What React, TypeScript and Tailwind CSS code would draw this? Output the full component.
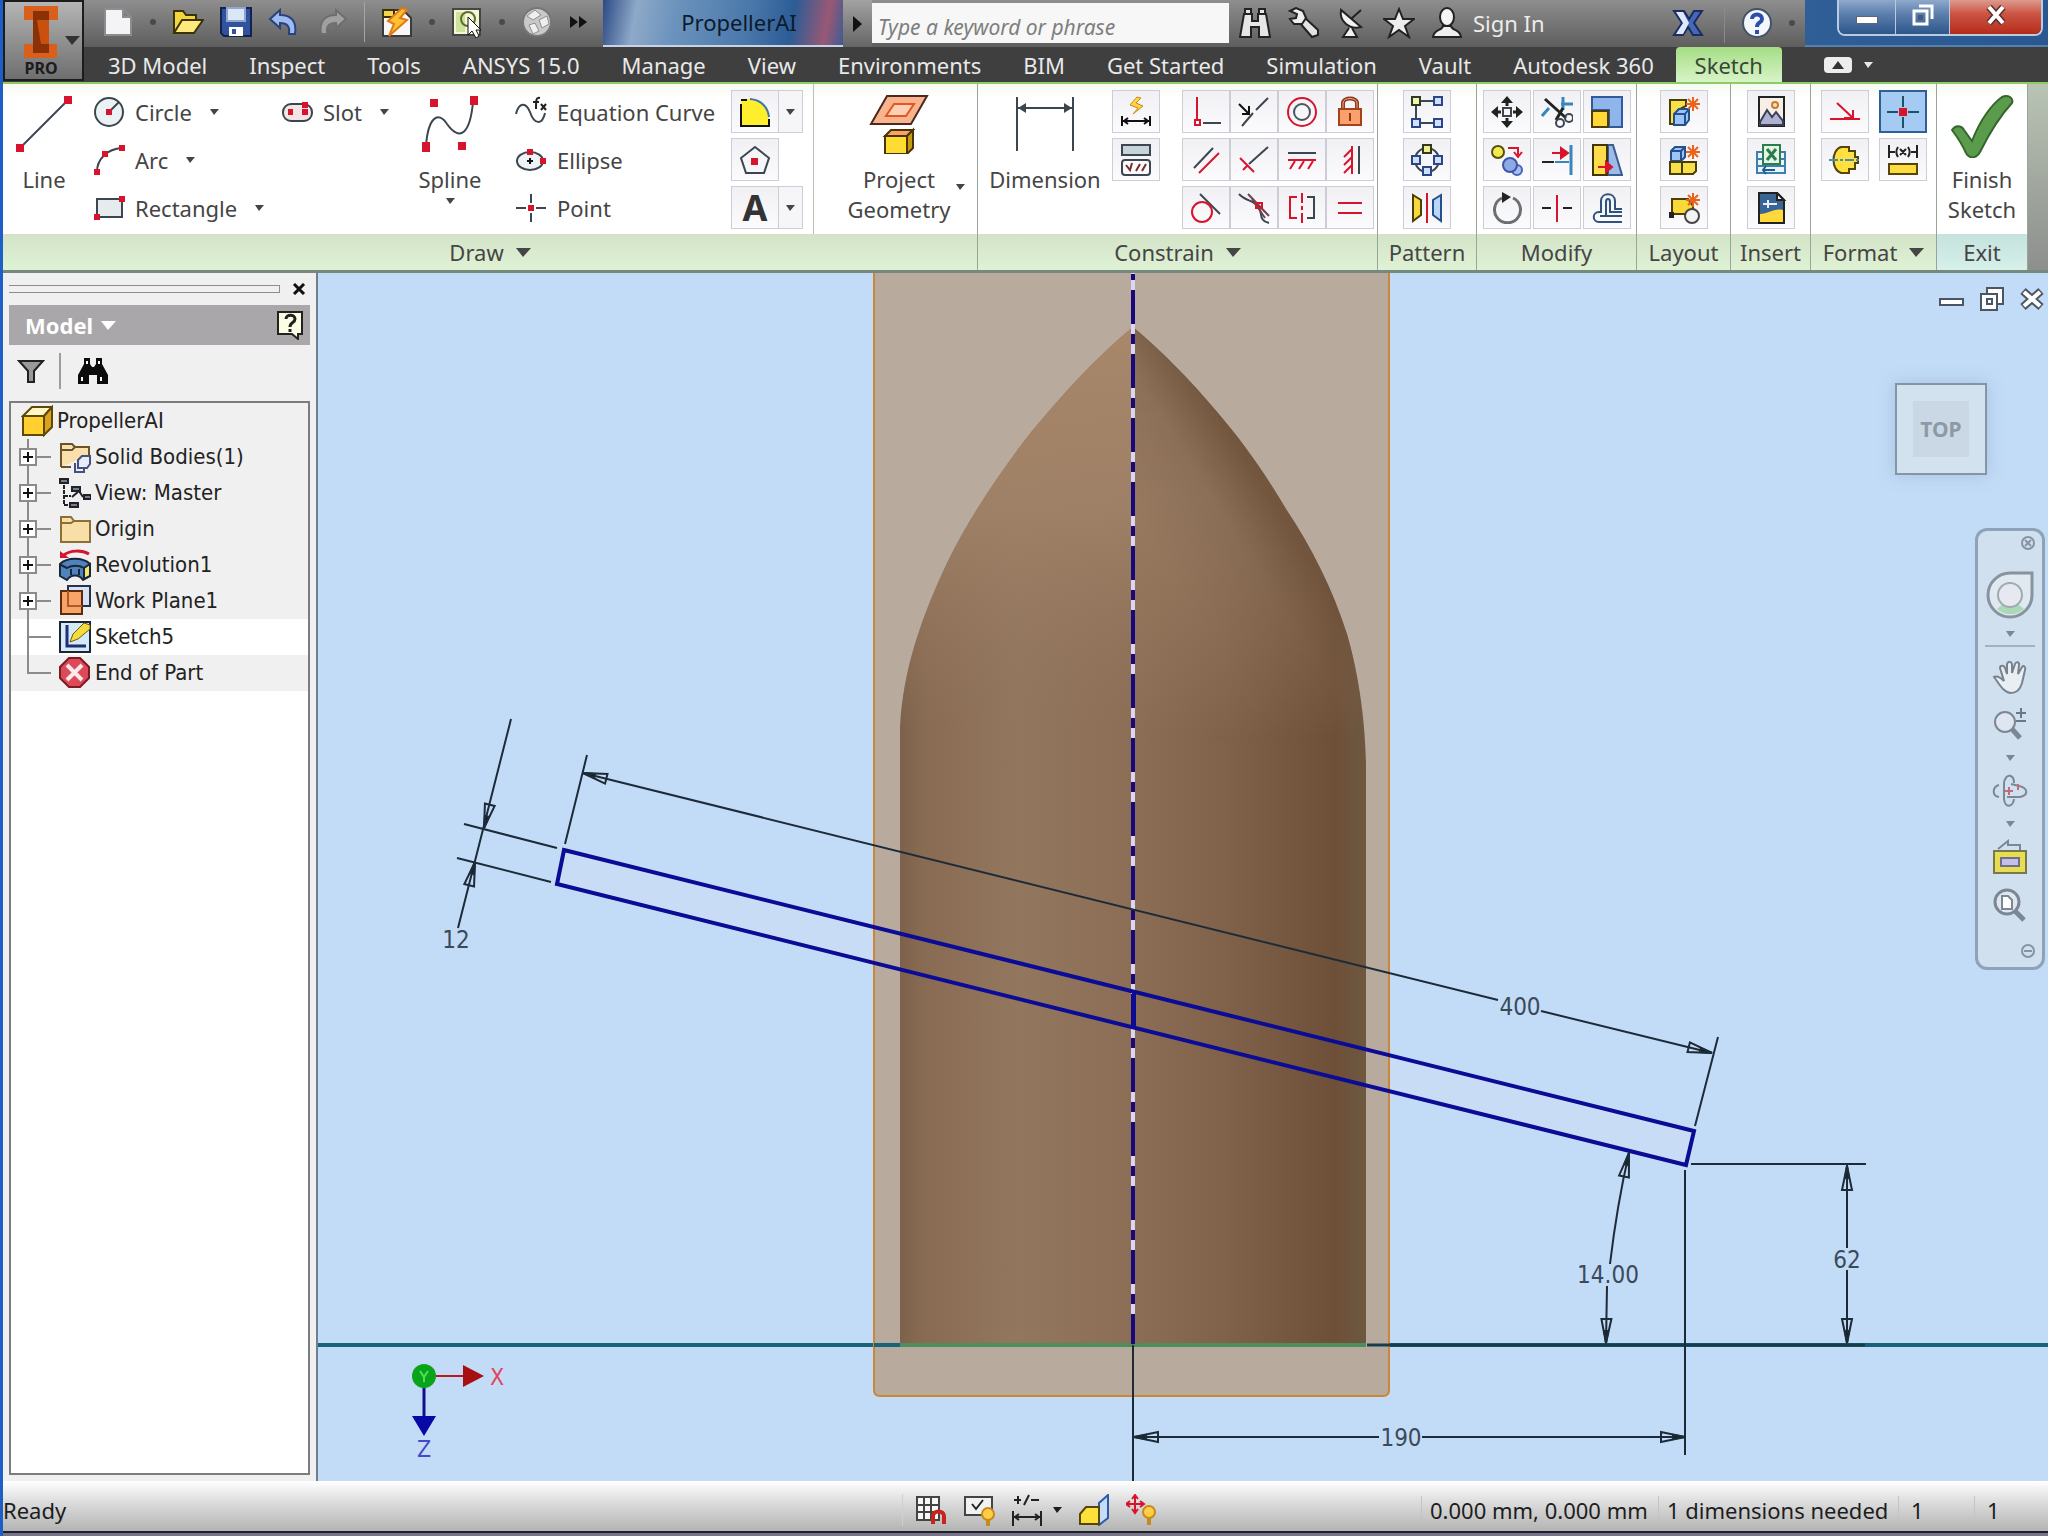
import type { ReactNode } from "react";

const red = "#d8142c";
const ink = "#3c4650";

const Icon = ({ size = 32, children }: { size?: number; children: ReactNode }) => (
  <svg
    width={size}
    height={size}
    viewBox={`0 0 ${size} ${size}`}
    fill="none"
    stroke={ink}
    strokeWidth={2}
    className="block shrink-0"
    aria-hidden="true"
  >
    {children}
  </svg>
);

const Caret = ({ big = false }: { big?: boolean }) =>
  big ? (
    <svg width="15" height="9" viewBox="0 0 15 9" className="shrink-0" aria-hidden="true">
      <path d="M0 0H15L7 9Z" fill="currentColor" />
    </svg>
  ) : (
    <svg width="9" height="6" viewBox="0 0 9 6" className="shrink-0" aria-hidden="true">
      <path d="M0 0H9L4 6Z" fill="currentColor" />
    </svg>
  );

const Dot = () => <span className="h-1.5 w-1.5 shrink-0 rounded-sm bg-[#4a4a4a]" />;

const Spark = () => (
  <path d="M25 1V15M18 8H32M20 3L30 13M30 3L20 13" stroke="#e8641c" strokeWidth={2} />
);

const icons = {
  newFile: <path d="M3 3H21L29 11V29H3Z M21 3V11H29" fill="#f4f4f6" stroke="#8b8b90" />,
  open: (
    <>
      <path d="M2 27V5H11L14 9H24V14" fill="#f4d540" stroke="#3b3208" />
      <path d="M2 27L10 14H31L22 27Z" fill="#ffe97a" stroke="#3b3208" />
    </>
  ),
  save: (
    <>
      <path d="M1 2H31V30H4L1 27Z" fill="#31529c" stroke="#14234d" />
      <path d="M7 2H25V15H7Z" fill="#dbe6f6" stroke="#8fa6d2" />
      <path d="M9 21H23V30H9Z" fill="#fff" stroke="none" />
      <path d="M12 23H16V28H12Z" fill="#31529c" stroke="none" />
    </>
  ),
  undo: <path d="M2 13L12 4V9C23 9 29 15 27 28H21C22 20 19 17 12 17V22Z" fill="#9dbcf0" stroke="#2a417c" />,
  redo: <path d="M30 13L20 4V9C9 9 3 15 5 28H11C10 20 13 17 20 17V22Z" fill="#a0a0a0" stroke="#6e6e6e" />,
  updateDoc: (
    <>
      <path d="M2 4H22L30 12V30H2Z" fill="#f7f7f7" stroke="#3a3a3a" />
      <path d="M2 4H13V11H2Z" fill="#f5d64a" stroke="#3a3208" />
      <path d="M21 2L7 15L13 18L8 30L26 14L19 12L26 4Z" fill="#ffc233" stroke="#e27914" />
    </>
  ),
  select: (
    <>
      <path d="M2 3H29V29H2Z" fill="#f3f7d6" stroke="#454545" />
      <path d="M5 6H14V26H5Z" fill="#cfe29a" stroke="none" />
      <circle cx="17" cy="13" r="7" stroke="#5b6c33" />
      <path d="M17 11V29L21 25L25 32L28 30L25 24H30Z" fill="#fff" stroke="#111" strokeWidth={1} />
    </>
  ),
  sphere: (
    <>
      <circle cx="16" cy="16" r="14" fill="#c9c9c9" stroke="#777" />
      <path d="M6 10L14 4L20 9L12 14ZM18 14L26 10L28 18L21 22ZM8 19L14 17L18 25L12 28Z" fill="#efefef" stroke="#8d8d8d" strokeWidth={1} />
    </>
  ),
  binoculars: (
    <path d="M5 7H13V14H19V7H27L31 30H20V20H12V30H1Z M6 2H12V7H6Z M20 2H26V7H20Z" fill="#e6e6e6" stroke="#222" />
  ),
  key: (
    <>
      <path d="M12 15L25 30L31 28V23L17 10Z" fill="#e3e3e3" stroke="#222" />
      <path d="M3 4L9 1L16 4L19 11L15 17L7 17L3 12L9 11L10 7Z" fill="#eee" stroke="#222" />
    </>
  ),
  dish: (
    <>
      <path d="M6 3C4 14 14 23 26 20Z" fill="#f2f2f2" stroke="#222" />
      <path d="M16 12L26 3M14 21L8 30H22L17 21" fill="#f2f2f2" stroke="#222" />
    </>
  ),
  star: <path d="M16 2L20 12L31 12L22 19L26 30L16 23L6 30L10 19L1 12L12 12Z" fill="#eee" stroke="#222" />,
  person: (
    <>
      <path d="M2 30C3 22 11 24 12 19H20C21 24 29 22 30 30Z" fill="#eee" stroke="#222" />
      <ellipse cx="16" cy="10" rx="7" ry="9" fill="#f4f4f4" stroke="#222" />
    </>
  ),
  exchange: (
    <>
      <path d="M2 4H12L17 12L22 4H30L22 16L30 28H21L16 20L11 28H2L10 16Z" fill="#4568b5" stroke="#1a2c62" />
      <path d="M4 5H11L17 16L11 27H4L11 16Z" fill="#dfe9fb" stroke="none" />
    </>
  ),
  help: (
    <>
      <circle cx="16" cy="16" r="14" fill="#f3f6fb" stroke="#44516b" />
      <path d="M11 12C11 6 21 6 21 12C21 16 16 15 16 20" stroke="#2a4fa8" strokeWidth={4} />
      <path d="M14 23H18V27H14Z" fill="#2a4fa8" stroke="none" />
    </>
  ),
  circle: (
    <>
      <circle cx="16" cy="16" r="14" fill="#eaf2f5" />
      <path d="M16 16L26 6" />
      <path d="M13 13H19V19H13Z" fill={red} stroke="none" />
    </>
  ),
  arc: (
    <>
      <path d="M4 28C4 15 14 5 29 4" />
      <path d="M1 25H7V31H1ZM9 7H15V13H9ZM26 1H32V7H26Z" fill={red} stroke="none" />
    </>
  ),
  rectangle: (
    <>
      <path d="M4 7H29V25H4Z" fill="#e6ecee" />
      <path d="M26 4H32V10H26ZM1 22H7V28H1Z" fill={red} stroke="none" />
    </>
  ),
  slot: (
    <>
      <rect x="2" y="8" width="29" height="17" rx="8" fill="#f4e4e6" stroke={ink} />
      <path d="M7 13H12V19H7ZM21 13H27V19H21ZM21 6H27V12H21Z" fill={red} stroke="none" />
    </>
  ),
  equation: (
    <>
      <path d="M1 18C4 6 11 6 15 16C19 28 27 30 30 17" />
      <path d="M25 2C21 1 21 4 21 13M18 6H24M26 8L31 14M31 8L26 14" strokeWidth={2} stroke="#222" />
    </>
  ),
  ellipse: (
    <>
      <ellipse cx="15" cy="17" rx="13" ry="9" fill="#eef4f6" />
      <path d="M12 17H18M15 14V20" stroke="#111" />
      <path d="M12 5H18V11H12ZM25 14H31V20H25Z" fill={red} stroke="none" />
    </>
  ),
  point: (
    <>
      <path d="M16 2V11M16 21V30M1 16H11M21 16H31" />
      <path d="M13 13H19V19H13Z" fill={red} stroke="none" />
    </>
  ),
  fillet: (
    <>
      <path d="M2 3H14C24 4 29 12 30 22V30H2Z" fill="#ffee2b" stroke="none" />
      <path d="M2 8V30H30V23M2 4H8" stroke="#111" />
      <path d="M11 3C23 4 29 12 30 21" stroke="#3f75ad" />
    </>
  ),
  polygon: (
    <>
      <path d="M16 3L30 14L25 29H7L2 14Z" fill="#f4f6f7" />
      <path d="M12 14H19V21H12Z" fill={red} stroke="none" />
    </>
  ),
  autoDim: (
    <>
      <path d="M17 1L10 9L18 12L13 18L23 10L16 7L21 2Z" fill="#ffd447" stroke="#c98a12" strokeWidth={1} />
      <path d="M2 20V30M30 20V30M3 25H29M8 22L4 25L8 28M24 22L28 25L24 28" stroke="#111" />
    </>
  ),
  showCon: (
    <>
      <path d="M2 1H30V11H2Z" fill="#c7d3da" />
      <rect x="2" y="16" width="28" height="15" rx="3" fill="#fafafa" />
      <path d="M6 21L10 26L12 19M16 27L20 20M22 27L26 20" stroke="#7b2b30" />
    </>
  ),
  coincident: (
    <>
      <path d="M7 1V23" stroke={red} />
      <path d="M5 24H10V29H5Z" stroke={red} fill="#fff" />
      <path d="M13 27H31" />
    </>
  ),
  collinear: (
    <>
      <path d="M4 30L15 17M18 14L30 2" />
      <path d="M1 8L11 18M11 10V18H4" stroke="#111" />
    </>
  ),
  concentric: (
    <>
      <circle cx="16" cy="16" r="14" stroke={red} />
      <circle cx="16" cy="16" r="8" stroke="#4b5560" />
    </>
  ),
  fix: (
    <>
      <path d="M9 13V7C9 1 23 1 23 7V13" stroke="#8b3a1c" strokeWidth={4} />
      <path d="M9 13V7C9 1 23 1 23 7V13" stroke="#f7a980" strokeWidth={1} />
      <path d="M5 13H27V29H5Z" fill="#f9a06c" stroke="#a3421b" />
      <path d="M16 17V25" stroke="#8b3a1c" />
    </>
  ),
  parallel: (
    <>
      <path d="M4 24L23 4" />
      <path d="M9 29L29 9" stroke={red} />
    </>
  ),
  perpendicular: (
    <>
      <path d="M11 20L30 3" />
      <path d="M2 14L16 28M9 22L5 26" stroke={red} />
    </>
  ),
  horizontal: (
    <>
      <path d="M2 9H30" />
      <path d="M2 16H30M9 17L4 25M18 17L13 25M27 17L22 25" stroke={red} />
    </>
  ),
  vertical: (
    <>
      <path d="M25 2V30" />
      <path d="M18 2V30M18 5L10 13M18 13L10 21M18 21L10 29" stroke={red} />
    </>
  ),
  tangent: (
    <>
      <path d="M10 2L30 22" />
      <ellipse cx="12" cy="20" rx="10" ry="10" stroke={red} />
    </>
  ),
  smooth: (
    <>
      <path d="M1 2C8 10 16 7 21 16C25 22 20 28 31 31" />
      <path d="M10 2L31 24M14 7L27 26" stroke="#6c4350" />
      <path d="M18 11H24V16H18Z" stroke={red} />
    </>
  ),
  symmetric: (
    <>
      <path d="M11 5H4V26H11" stroke={red} />
      <path d="M21 5H28V26H21" />
      <path d="M16 1V11M16 14V18M16 21V31" stroke={red} />
    </>
  ),
  equal: <path d="M4 11H28M4 21H28" stroke={red} />,
  rectPattern: (
    <>
      <path d="M5 5H27M5 5V27H27" />
      <path d="M1 1H9V9H1Z" fill="#f2f4b4" stroke="#2f3a1f" />
      <path d="M23 1H31V9H23ZM1 23H9V31H1ZM23 23H31V31H23Z" fill="#cfe0ff" stroke="#2b4685" />
    </>
  ),
  circPattern: (
    <>
      <circle cx="16" cy="16" r="12" />
      <path d="M12 1H20V9H12Z" fill="#f0f08a" stroke="#2f3a1f" />
      <path d="M1 12H9V20H1ZM23 12H31V20H23ZM12 23H20V31H12Z" fill="#cfe0ff" stroke="#2b4685" />
    </>
  ),
  mirror: (
    <>
      <path d="M2 3L10 8V23L2 29Z" fill="#f8d93a" stroke="#4a3d05" />
      <path d="M30 3L22 8V23L30 29Z" fill="#bcd6f7" stroke="#22508e" />
      <path d="M16 1V31" stroke={red} />
    </>
  ),
  move: (
    <>
      <path d="M12 12H20V20H12Z" strokeWidth={2} />
      <path d="M16 0L22 7H10ZM16 32L22 25H10ZM0 16L7 10V22ZM32 16L25 10V22Z" fill="#222" stroke="none" />
      <path d="M16 5V10M16 22V27M5 16H10M22 16H27" stroke="#222" strokeWidth={3} />
    </>
  ),
  trim: (
    <>
      <path d="M22 1V14M20 8H32M1 20L8 12" stroke="#3a86bb" strokeWidth={3} />
      <path d="M4 3L25 22M22 12L15 24" stroke="#222" strokeWidth={3} />
      <circle cx="19" cy="27" r="4" />
      <circle cx="28" cy="22" r="4" />
    </>
  ),
  scale: (
    <>
      <path d="M1 1H31V31H18V14H1Z" fill="#8fb5ea" stroke="#2f5aa0" />
      <path d="M1 15H17V31H1Z" fill="#ffd736" stroke="#4a3d05" />
    </>
  ),
  copy: (
    <>
      <circle cx="7" cy="8" r="6" fill="#f2ea52" stroke="#54500c" />
      <circle cx="26" cy="26" r="5" fill="#a9bff0" stroke="#4663b5" />
      <circle cx="19" cy="21" r="7" fill="#8fa9e6" stroke="#3956a8" />
      <path d="M17 4H27V11M23 8L27 13L31 8" stroke={red} />
    </>
  ),
  extend: (
    <>
      <path d="M30 1V31" stroke="#3a86bb" strokeWidth={3} />
      <path d="M1 18H13" stroke="#222" />
      <path d="M14 18H28" stroke="#3a86bb" />
      <path d="M11 9H25M20 4L27 9L20 14Z" stroke={red} fill={red} />
    </>
  ),
  stretch: (
    <>
      <path d="M17 1H22L31 31H17Z" fill="#9dbbe8" stroke="#3b5c93" />
      <path d="M2 1H16V31H2Z" fill="#ffdc4b" stroke="#3f3608" />
      <path d="M7 23H19M15 18L21 23L15 28Z" stroke={red} fill={red} />
    </>
  ),
  rotate: (
    <>
      <path d="M11 6A13 13 0 1 0 22 6" stroke="#6b6f73" strokeWidth={3} />
      <path d="M11 0L20 5L11 11Z" fill="#222" stroke="none" />
    </>
  ),
  split: (
    <>
      <path d="M1 16H10M22 16H31" stroke="#222" />
      <path d="M16 3V30" stroke={red} />
    </>
  ),
  offset: (
    <>
      <path d="M31 30H8C1 30 1 20 8 20H10V9C10 0 24 0 24 9V17H31" stroke="#31527c" />
      <path d="M31 24H9M15 24V10C15 6 19 6 19 10V20H31" stroke="#31527c" />
    </>
  ),
  makePart: (
    <>
      <path d="M2 4H18V10L10 14V28H2Z" fill="#f8e04a" stroke="#4a3d05" />
      <path d="M6 18L11 13H21V24L17 29H6Z" fill="#9cc4f4" stroke="#24508e" />
      <path d="M6 18H17V29M17 18L21 13" stroke="#24508e" />
      <Spark />
    </>
  ),
  makeComp: (
    <>
      <path d="M3 7L7 3H17V13L13 17H3Z" fill="#9cc4f4" stroke="#24508e" />
      <path d="M3 7H13V17M13 7L17 3" stroke="#24508e" />
      <path d="M2 18H14V30H2ZM14 18H28V27L25 30H14Z" fill="#f8e04a" stroke="#4a3d05" />
      <Spark />
    </>
  ),
  makeBlock: (
    <>
      <path d="M4 7H20L25 14V22H4Z" fill="#f8d93a" stroke="#4a3d05" />
      <circle cx="24" cy="24" r="7" fill="#f3f3f3" stroke="#444" />
      <path d="M1 20H6V26H1Z" fill="#222" stroke="none" />
      <Spark />
    </>
  ),
  image: (
    <>
      <path d="M4 1H29V30H4Z" fill="#f7eee6" stroke="#222" />
      <path d="M5 26L12 14L17 21L21 16L28 25V29H5Z" fill="#aeb2cf" stroke="#3a3d58" />
      <circle cx="20" cy="9" r="3" fill="#ffe2b0" stroke="#c77c33" />
    </>
  ),
  excel: (
    <>
      <path d="M2 8H30V29H2ZM2 15H30M2 22H30" stroke="#3c7fb0" fill="#eaf4fa" />
      <path d="M8 1H25V20H8Z" fill="#e3f4e6" stroke="#2d7d4a" />
      <path d="M12 5L21 16M21 5L12 16" stroke="#2d7d4a" strokeWidth={3} />
      <path d="M11 22L8 26L11 30M8 26H20" stroke="#1c5e94" />
    </>
  ),
  acad: (
    <>
      <path d="M4 1H22L29 8V31H4Z" fill="#3a6494" stroke="#222" />
      <path d="M5 30V22C14 22 18 16 28 18V30Z" fill="#ffd93b" stroke="none" />
      <path d="M8 12H22M13 8V16" stroke="#e6f0fa" />
      <path d="M22 1V8H29Z" fill="#fff" stroke="#222" />
    </>
  ),
  construction: <path d="M1 23H31M8 7L24 22M24 14V22H15" stroke={red} />,
  centerPoint: (
    <>
      <path d="M16 0V11M16 21V32M0 16H11M21 16H32" stroke="#1d5266" />
      <path d="M12 12H20V20H12Z" fill={red} stroke="none" />
    </>
  ),
  centerline: (
    <>
      <path d="M12 3H20V7H26V13H29V19H26V25H20V29H12C2 26 2 6 12 3Z" fill="#ffe03c" stroke="#54460a" />
      <path d="M0 16H32" stroke="#3f8fc4" strokeDasharray="9 2 3 2" />
    </>
  ),
  driven: (
    <>
      <path d="M2 1V14M30 1V14M2 8H8M24 8H30M11 3C9 6 9 10 11 13M21 3C23 6 23 10 21 13M13 5L19 11M19 5L13 11" stroke="#222" />
      <path d="M2 20H30V30H2Z" fill="#ffdc3d" stroke="#54460a" />
    </>
  ),
  gridSnap: (
    <>
      <path d="M2 3H24V26H2ZM2 11H24M2 18H24M9 3V26M16 3V26" stroke="#444" fill="#f7f7f7" />
      <path d="M18 30V22C18 16 29 16 29 22V30" stroke="#c9241c" strokeWidth={4} />
    </>
  ),
  conSettings: (
    <>
      <path d="M2 3H29V21H2Z" fill="#f1f1f1" stroke="#444" />
      <path d="M9 10L13 15L20 6" stroke="#222" />
      <circle cx="25" cy="20" r="6" fill="#ffce45" stroke="#c88a1c" />
      <path d="M25 25V32" stroke="#c88a1c" strokeWidth={4} />
    </>
  ),
  dimDisplay: (
    <>
      <path d="M3 6H10M7 2V10M13 11L18 1M20 6H28" stroke="#222" />
      <path d="M2 17V32M30 17V32M3 23H29M8 20L4 23L8 26M24 20L28 23L24 26" stroke="#222" />
    </>
  ),
  slice: (
    <>
      <path d="M21 9L30 1V24L21 31Z" fill="#c4dcf7" stroke="#2b5ba8" />
      <path d="M2 20L8 13H21V30H2Z" fill="#ffdf3a" stroke="#54460a" />
    </>
  ),
  relax: (
    <>
      <path d="M9 2V18M1 10H17M6 5L9 1L12 5M6 15L9 19L12 15M4 7L0 10L4 13M14 7L18 10L14 13" stroke={red} />
      <circle cx="23" cy="18" r="6" fill="#ffce45" stroke="#c88a1c" />
      <path d="M23 23V31" stroke="#c88a1c" strokeWidth={4} />
    </>
  ),
  partCube: (
    <>
      <path d="M2 11L11 2H31L23 11Z" fill="#fff6c4" stroke="#5d4809" />
      <path d="M23 11L31 2V22L23 30Z" fill="#dba21c" stroke="#5d4809" />
      <path d="M2 11H23V30H2Z" fill="#ffd02e" stroke="#5d4809" />
    </>
  ),
  solidBodies: (
    <>
      <path d="M2 26V3H13L16 6H30V14M2 26H12M2 9H13L16 6" fill="#f8dfab" stroke="#6b5326" />
      <path d="M16 22V31H25V26M19 19L23 15H31V23L28 27H19Z" fill="#e6ecfb" stroke="#46507c" />
    </>
  ),
  viewMaster: (
    <>
      <path d="M5 8V28H12M5 19H12M24 19H32" stroke="#222" strokeDasharray="4 1" />
      <path d="M1 2H9V6H1ZM13 10H21V14H13ZM25 18H32V22H25ZM11 26H19V30H11Z" fill="#6f7f95" stroke="#222" />
      <path d="M13 20L20 14L24 20" stroke="#222" />
    </>
  ),
  folder: <path d="M2 29V4H12L15 8H31V29ZM2 10H12L15 8" fill="#f8dfa8" stroke="#8d6f34" />,
  revolution: (
    <>
      <path d="M5 6C11 1 23 1 30 5" stroke={red} strokeWidth={3} />
      <path d="M1 2V9H10Z" fill={red} stroke="none" />
      <path d="M1 15C8 8 24 8 31 15V27L24 31C20 25 12 25 8 31L1 27Z" fill="#4f83bd" stroke="#1a2738" />
      <path d="M25 19L31 15V27L25 30Z" fill="#f2e86c" stroke="#1a2738" />
      <path d="M2 16L8 19C13 16 20 16 25 19M12 20V26M20 20V26" stroke="#1a2738" />
    </>
  ),
  workPlane: (
    <>
      <path d="M9 1H31V21H9Z" fill="#d7e2f4" stroke="#28324a" />
      <path d="M2 6H23V29H2Z" fill="#f7a468" stroke="#5b2c10" />
      <path d="M9 6V21H23" stroke="#b5562a" />
    </>
  ),
  sketch: (
    <>
      <path d="M1 1H31V31H1Z" fill="#d5e9f7" stroke="#1b2538" />
      <path d="M8 4V25H27" stroke="#1c2f78" strokeWidth={3} />
      <path d="M11 21L14 13L25 2L31 4V8L19 18Z" fill="#f4dc3c" stroke="#6e5d10" strokeWidth={1} />
    </>
  ),
  endOfPart: (
    <>
      <path d="M10 1H21L30 10V21L21 30H10L1 21V10Z" fill="#dc4a58" stroke="#7d1a24" />
      <path d="M8 8L23 23M23 8L8 23" stroke="#fbe9eb" strokeWidth={4} />
    </>
  ),
};

type IconName = keyof typeof icons;

const quickLeft: { name: IconName; label: string; menu?: boolean; bar?: boolean }[] = [
  { name: "newFile", label: "New", menu: true },
  { name: "open", label: "Open" },
  { name: "save", label: "Save" },
  { name: "undo", label: "Undo" },
  { name: "redo", label: "Redo", bar: true },
  { name: "updateDoc", label: "Update", menu: true },
  { name: "select", label: "Select", menu: true },
  { name: "sphere", label: "Material" },
];

const quickRight: IconName[] = ["binoculars", "key", "dish", "star"];

const tabs = [
  "3D Model",
  "Inspect",
  "Tools",
  "ANSYS 15.0",
  "Manage",
  "View",
  "Environments",
  "BIM",
  "Get Started",
  "Simulation",
  "Vault",
  "Autodesk 360",
];

const constraints: IconName[] = [
  "coincident", "collinear", "concentric", "fix",
  "parallel", "perpendicular", "horizontal", "vertical",
  "tangent", "smooth", "symmetric", "equal",
];

const modify: IconName[] = [
  "move", "trim", "scale",
  "copy", "extend", "stretch",
  "rotate", "split", "offset",
];

const tree: { name: IconName; text: string; expand?: boolean; active?: boolean }[] = [
  { name: "solidBodies", text: "Solid Bodies(1)", expand: true },
  { name: "viewMaster", text: "View: Master", expand: true },
  { name: "folder", text: "Origin", expand: true },
  { name: "revolution", text: "Revolution1", expand: true },
  { name: "workPlane", text: "Work Plane1", expand: true },
  { name: "sketch", text: "Sketch5", active: true },
  { name: "endOfPart", text: "End of Part" },
];

const ToolButton = ({ name, active = false }: { name: IconName; active?: boolean }) => (
  <button
    aria-label={name}
    className={
      active
        ? "flex h-[43px] w-12 items-center justify-center border-2 border-[#2f5f96] bg-[#a5cbf5]"
        : "flex h-[43px] w-12 items-center justify-center border border-[#cdcdd6] bg-gradient-to-b from-[#f1f1f5] to-[#fbfbfd]"
    }
  >
    <Icon>{icons[name]}</Icon>
  </button>
);

const Tool = ({ name, text, menu = false }: { name: IconName; text: string; menu?: boolean }) => (
  <button className="flex h-12 items-center gap-2.5 whitespace-nowrap">
    <Icon>{icons[name]}</Icon>
    <span>{text}</span>
    {menu && (
      <span className="ml-2">
        <Caret />
      </span>
    )}
  </button>
);

const Panel = ({
  title,
  width,
  menu = false,
  exit = false,
  children,
}: {
  title: string;
  width: string;
  menu?: boolean;
  exit?: boolean;
  children: ReactNode;
}) => (
  <section className={`flex shrink-0 flex-col border-r border-[#9aa59a] ${width}`}>
    <div className="flex h-[150px] bg-gradient-to-b from-[#f6fbf2] via-white via-10% to-white">{children}</div>
    <div
      className={
        exit
          ? "flex h-9 items-center justify-center gap-3 bg-gradient-to-b from-[#c5e2dc] to-[#d6f0ea]"
          : "flex h-9 items-center justify-center gap-3 bg-gradient-to-b from-[#d2e3c8] to-[#e0f2d4]"
      }
    >
      {title}
      {menu && <Caret big />}
    </div>
  </section>
);

const TitleBar = () => (
  <div className="flex h-[47px] bg-gradient-to-b from-[#8e8e8e] to-[#5e5e5e]">
    <div className="flex w-[519px] shrink-0 items-center gap-4 pb-1 pl-[18px]">
      {quickLeft.map((item) => (
        <span key={item.name} className="flex items-center gap-4">
          <button aria-label={item.label}>
            <Icon>{icons[item.name]}</Icon>
          </button>
          {item.menu && <Dot />}
          {item.bar && <span className="h-10 w-px bg-[#a5a5a5]" />}
        </span>
      ))}
      <button aria-label="More commands">
        <svg width="20" height="14" viewBox="0 0 20 14" aria-hidden="true">
          <path d="M1 1L9 7L1 13ZM10 1L18 7L10 13Z" fill="#111" />
        </svg>
      </button>
    </div>
    <h1 className="flex w-60 shrink-0 items-center justify-center border-b-2 border-[#c9d3e6] bg-[linear-gradient(100deg,#2c4a86_0%,#8ea9c8_14%,#6c93bd_30%,#4a78ab_60%,#2c5c96_78%,#9a5874_92%,#3f5c94_100%)] pb-0.5 pl-8 font-normal text-[#0d1a2b]">
      PropellerAI
    </h1>
    <button aria-label="Toggle search" className="flex w-[29px] shrink-0 items-center justify-center bg-gradient-to-b from-[#a2a2a2] to-[#666]">
      <svg width="9" height="16" viewBox="0 0 9 16" aria-hidden="true">
        <path d="M0 0L9 8L0 16Z" fill="#111" />
      </svg>
    </button>
    <input
      aria-label="Search"
      placeholder="Type a keyword or phrase"
      className="mt-[3px] h-10 w-[357px] shrink-0 bg-[#f6f7f6] px-1.5 pt-2 text-[21px] italic text-[#333] placeholder-[#7e7e7e]"
    />
    <div className="flex min-w-0 flex-1 items-center gap-4 px-2.5 pb-0.5 text-[#ececec]">
      {quickRight.map((name) => (
        <button key={name} aria-label={name}>
          <Icon>{icons[name]}</Icon>
        </button>
      ))}
      <button className="flex items-center gap-2.5 whitespace-nowrap">
        <Icon>{icons.person}</Icon>
        Sign In
      </button>
      <span className="ml-auto">
        <Dot />
      </span>
      <button aria-label="Exchange" className="mr-1">
        <Icon>{icons.exchange}</Icon>
      </button>
      <span className="h-10 w-px bg-[#8a8a8a]" />
      <button aria-label="Help">
        <Icon>{icons.help}</Icon>
      </button>
      <Dot />
    </div>
    <div className="flex w-[243px] shrink-0 items-start justify-end border-b-2 border-[#5580b0] bg-gradient-to-r from-[#2f5f96] to-[#2a5790] pr-[5px]">
      <div className="flex h-9 overflow-hidden rounded-b-lg border-x-2 border-b-2 border-[#b9cbe2]">
        <button aria-label="Minimize" className="flex w-[57px] items-end justify-center border-r border-[#b9cbe2] bg-gradient-to-b from-[#8fa9cb] via-[#5d80ad] via-40% to-[#2e568b] pb-2.5">
          <span className="h-2 w-[22px] border border-[#5d6673] bg-white" />
        </button>
        <button aria-label="Restore" className="flex w-[54px] items-center justify-center border-r border-[#b9cbe2] bg-gradient-to-b from-[#8fa9cb] via-[#5d80ad] via-40% to-[#2e568b] pb-1">
          <svg width="24" height="24" viewBox="0 0 24 24" fill="none" aria-hidden="true">
            <path d="M8 3H21V16M3 8H16V21H3Z" stroke="#fff" strokeWidth="3" />
            <path d="M7 12H12V17H7Z" fill="#44597c" />
          </svg>
        </button>
        <button aria-label="Close" className="flex w-[91px] items-center justify-center bg-gradient-to-b from-[#dc9a8c] via-[#cc5444] via-40% to-[#b52a18] pb-1">
          <svg width="22" height="20" viewBox="0 0 22 20" fill="none" aria-hidden="true">
            <path d="M4 2L18 18M18 2L4 18" stroke="#5b3030" strokeWidth="7" />
            <path d="M4 2L18 18M18 2L4 18" stroke="#fff" strokeWidth="4" />
          </svg>
        </button>
      </div>
    </div>
  </div>
);

const TabBar = () => (
  <nav className="flex h-[35px] items-center gap-[42px] bg-[#3f3f3f] pl-6 text-[#e9e9e9]">
    {tabs.map((tab) => (
      <button key={tab} className="whitespace-nowrap">
        {tab}
      </button>
    ))}
    <button className="-ml-5 h-[35px] w-[106px] rounded-t-sm bg-gradient-to-b from-[#a4dd84] to-[#d8f4c8] text-[#3a4636]">
      Sketch
    </button>
    <button aria-label="Ribbon display" className="flex items-center gap-3">
      <svg width="28" height="16" viewBox="0 0 28 16" aria-hidden="true">
        <rect width="28" height="16" rx="4" fill="#ededed" />
        <path d="M8 12L14 4L20 12Z" fill="#333" />
      </svg>
      <Caret />
    </button>
  </nav>
);

const Ribbon = () => (
  <div className="flex border-b-[3px] border-t-2 border-b-[#75897f] border-t-[#8ecb66] bg-gradient-to-b from-[#b9c4b4] to-[#8d8f8d] text-[#454545]">
    <Panel title="Draw" width="w-[975px]" menu>
      <button className="flex w-[82px] flex-col items-center pt-3 leading-[30px]">
        <Icon size={56}>
          <path d="M4 52L52 4" />
          <path d="M0 48H8V56H0ZM48 0H56V8H48Z" fill={red} stroke="none" />
        </Icon>
        <span className="mt-3">Line</span>
      </button>
      <div className="flex w-[196px] flex-col pl-2 pt-1">
        <Tool name="circle" text="Circle" menu />
        <Tool name="arc" text="Arc" menu />
        <Tool name="rectangle" text="Rectangle" menu />
      </div>
      <div className="flex w-[134px] flex-col pt-1">
        <Tool name="slot" text="Slot" menu />
      </div>
      <button className="flex w-[70px] flex-col items-center pt-3 leading-[30px]">
        <Icon size={56}>
          <path d="M4 50C6 22 16 14 25 28C38 46 48 38 51 6" />
          <path d="M0 46H8V56H0ZM48 0H56V9H48ZM8 3H16V11H8ZM36 46H44V54H36Z" fill={red} stroke="none" />
        </Icon>
        <span className="mt-3">Spline</span>
        <span className="mt-1">
          <Caret />
        </span>
      </button>
      <div className="ml-[30px] flex w-[216px] flex-col pt-1">
        <Tool name="equation" text="Equation Curve" />
        <Tool name="ellipse" text="Ellipse" />
        <Tool name="point" text="Point" />
      </div>
      <div className="flex w-[83px] flex-col gap-[5px] border-r border-[#b9c2b9] pt-1.5">
        <div className="flex">
          <ToolButton name="fillet" />
          <button aria-label="Fillet options" className="flex h-[43px] w-6 items-center justify-center border border-l-0 border-[#cdcdd6] bg-[#f6f6f9]">
            <Caret />
          </button>
        </div>
        <ToolButton name="polygon" />
        <div className="flex">
          <button aria-label="Text" className="flex h-[43px] w-12 items-center justify-center border border-[#cdcdd6] bg-gradient-to-b from-[#f1f1f5] to-[#fbfbfd] text-[36px] font-bold leading-none text-[#333]">
            A
          </button>
          <button aria-label="Text options" className="flex h-[43px] w-6 items-center justify-center border border-l-0 border-[#cdcdd6] bg-[#f6f6f9]">
            <Caret />
          </button>
        </div>
      </div>
      <button className="flex flex-1 items-start pl-7 pt-2.5 leading-[30px]">
        <span className="flex w-[114px] flex-col items-center">
          <Icon size={60}>
            <path d="M18 2H58L42 30H2Z" fill="#f9b48f" stroke="#4a2a1c" />
            <path d="M25 10H45L37 22H17Z" fill="#fbd0b6" stroke="#e2571c" />
            <path d="M16 42L22 36H44L38 42Z" fill="#f9a06c" stroke="#4a3305" />
            <path d="M38 42L44 36V54L38 60Z" fill="#c89a12" stroke="#4a3305" />
            <path d="M16 42H38V60H16Z" fill="#ffdc32" stroke="#4a3305" />
          </Icon>
          <span className="mt-2.5">Project</span>
          <span>Geometry</span>
        </span>
        <span className="mt-[90px]">
          <Caret />
        </span>
      </button>
    </Panel>

    <Panel title="Constrain" width="w-[400px]" menu>
      <button className="flex w-[134px] flex-col items-center pt-3 leading-[30px]">
        <Icon size={60}>
          <path d="M2 1V55M58 1V55M3 12H57" />
          <path d="M3 12L11 7V17ZM57 12L49 7V17Z" fill={ink} stroke="none" />
        </Icon>
        <span className="mt-2">Dimension</span>
      </button>
      <div className="flex w-[70px] flex-col gap-[5px] pt-1.5">
        <ToolButton name="autoDim" />
        <ToolButton name="showCon" />
      </div>
      <div className="grid grid-cols-4 content-start gap-y-[5px] pt-1.5">
        {constraints.map((name) => (
          <ToolButton key={name} name={name} />
        ))}
      </div>
    </Panel>

    <Panel title="Pattern" width="w-[99px]">
      <div className="mx-auto flex flex-col gap-[5px] pt-1.5">
        <ToolButton name="rectPattern" />
        <ToolButton name="circPattern" />
        <ToolButton name="mirror" />
      </div>
    </Panel>

    <Panel title="Modify" width="w-[160px]">
      <div className="mx-auto grid grid-cols-3 content-start gap-x-0.5 gap-y-[5px] pt-1.5">
        {modify.map((name) => (
          <ToolButton key={name} name={name} />
        ))}
      </div>
    </Panel>

    <Panel title="Layout" width="w-[94px]">
      <div className="mx-auto flex flex-col gap-[5px] pt-1.5">
        <ToolButton name="makePart" />
        <ToolButton name="makeComp" />
        <ToolButton name="makeBlock" />
      </div>
    </Panel>

    <Panel title="Insert" width="w-20">
      <div className="mx-auto flex flex-col gap-[5px] pt-1.5">
        <ToolButton name="image" />
        <ToolButton name="excel" />
        <ToolButton name="acad" />
      </div>
    </Panel>

    <Panel title="Format" width="w-[126px]" menu>
      <div className="mx-auto grid grid-cols-2 content-start gap-x-2.5 gap-y-[5px] pt-1.5">
        <ToolButton name="construction" />
        <ToolButton name="centerPoint" active />
        <ToolButton name="centerline" />
        <ToolButton name="driven" />
      </div>
    </Panel>

    <Panel title="Exit" width="w-[91px]" exit>
      <button className="flex flex-1 flex-col items-center pt-2.5 leading-[30px]">
        <Icon size={64}>
          <path
            d="M2 36C6 30 12 32 14 36L22 47C30 26 42 10 52 3C58 0 64 4 62 9C48 24 38 42 30 58C26 65 19 65 16 59C12 50 8 44 2 36Z"
            fill="#5b9c4c"
            stroke="#35662c"
          />
        </Icon>
        <span className="mt-1.5">Finish</span>
        <span>Sketch</span>
      </button>
    </Panel>
  </div>
);

const ModelBrowser = () => (
  <aside className="flex w-[315px] shrink-0 flex-col border-r-2 border-[#6f7f8f] bg-[#f0f0f0] px-1.5 pb-1.5 font-['DejaVu_Sans_Condensed','DejaVu_Sans',sans-serif] text-[#222]">
    <div className="flex h-8 items-center justify-between pr-1">
      <span className="h-2 w-[271px] border-y border-r border-[#8d8d8d]" />
      <button aria-label="Close browser">
        <svg width="14" height="12" viewBox="0 0 14 12" aria-hidden="true">
          <path d="M2 1L12 11M12 1L2 11" stroke="#111" strokeWidth="3" />
        </svg>
      </button>
    </div>
    <div className="flex h-10 items-center justify-between bg-[#a9a7a9] pl-4 pr-1.5 text-white">
      <button className="flex items-center gap-2 font-['Noto_Sans',sans-serif] font-bold">
        Model <Caret big />
      </button>
      <button aria-label="Browser help">
        <svg width="28" height="30" viewBox="0 0 28 30" fill="none" aria-hidden="true">
          <path d="M2 2H26V24H22V29L16 24H2Z" fill="#fdfde4" stroke="#222" strokeWidth="2" />
          <path d="M10 9C10 4 19 4 19 9C19 13 14 12 14 17M14 19V22" stroke="#222" strokeWidth="3" />
        </svg>
      </button>
    </div>
    <div className="flex h-14 items-center gap-[14px] pb-1 pl-2">
      <button aria-label="Filter">
        <svg width="28" height="24" viewBox="0 0 28 24" aria-hidden="true">
          <path d="M2 2H26L17 12V23H11V12Z" fill="#9a9a9a" stroke="#222" strokeWidth="2" />
        </svg>
      </button>
      <span className="h-9 w-0.5 bg-[#9d9d9d]" />
      <button aria-label="Find" className="ml-0.5">
        <svg width="32" height="28" viewBox="0 0 32 28" aria-hidden="true">
          <path d="M7 1H13V7L15 10H17L19 7V1H25V7L31 18V27H20V18H12V27H1V18L7 7Z" fill="#0c0c0c" />
          <path d="M5 20V24M24 20V24M10 4V7M22 4V7" stroke="#fff" strokeWidth="2" />
        </svg>
      </button>
    </div>
    <div className="flex-1 border-2 border-[#7c7c7c] bg-white">
      <div className="flex h-9 items-center gap-1 bg-[#f0f0f0] pl-2.5">
        <Icon>{icons.partCube}</Icon>
        PropellerAI
      </div>
      <ul>
        {tree.map((node) => (
          <li key={node.text} className={node.active ? "flex h-9 items-center bg-white" : "flex h-9 items-center bg-[#f0f0f0]"}>
            <svg width="48" height="36" viewBox="0 0 48 36" fill="none" stroke="#8b8b8b" strokeWidth="2" className="shrink-0" aria-hidden="true">
              <path d={node.text === "End of Part" ? "M17 0V18H40" : "M17 0V36M17 18H40"} />
              {node.expand && (
                <>
                  <path d="M9 10H25V26H9Z" fill="#fff" />
                  <path d="M12 18H22M17 13V23" stroke="#111" />
                </>
              )}
            </svg>
            <button className="flex items-center gap-1 whitespace-nowrap">
              <Icon>{icons[node.name]}</Icon>
              {node.text}
            </button>
          </li>
        ))}
      </ul>
    </div>
  </aside>
);

const DimArrow = ({ x, y, angle }: { x: number; y: number; angle: number }) => (
  <g transform={`translate(${x} ${y}) rotate(${angle})`}>
    <path d="M0 0L24 -5V5Z" fill="none" />
    <path d="M0 0L12 -2V2Z" fill="#14202c" />
  </g>
);

const SketchCanvas = () => (
  <svg
    viewBox="317 273 1730 1208"
    preserveAspectRatio="xMidYMid slice"
    className="block h-full w-full font-['DejaVu_Sans_Condensed','DejaVu_Sans',sans-serif]"
    role="img"
    aria-label="Sketch5"
  >
    <defs>
      <linearGradient id="barrel" x1="899" x2="1365" y1="0" y2="0" gradientUnits="userSpaceOnUse">
        <stop offset="0" stopColor="#7d614b" />
        <stop offset="0.05" stopColor="#886b52" />
        <stop offset="0.25" stopColor="#92765d" />
        <stop offset="0.5" stopColor="#8c6e56" />
        <stop offset="0.7" stopColor="#80614a" />
        <stop offset="0.93" stopColor="#6e4f38" />
        <stop offset="1" stopColor="#6d5840" />
      </linearGradient>
      <linearGradient id="noseLeft" x1="0" x2="0" y1="330" y2="730" gradientUnits="userSpaceOnUse">
        <stop offset="0" stopColor="#a8876a" />
        <stop offset="0.45" stopColor="#a08268" stopOpacity="0.9" />
        <stop offset="1" stopColor="#92765d" stopOpacity="0" />
      </linearGradient>
      <linearGradient id="noseRight" x1="1150" y1="542" x2="1256" y2="476" gradientUnits="userSpaceOnUse">
        <stop offset="0" stopColor="#987b61" />
        <stop offset="0.6" stopColor="#8c7058" />
        <stop offset="1" stopColor="#72563e" />
      </linearGradient>
      <linearGradient id="noseFade" x1="0" x2="0" y1="330" y2="740" gradientUnits="userSpaceOnUse">
        <stop offset="0" stopColor="#fff" />
        <stop offset="0.4" stopColor="#eee" />
        <stop offset="1" stopColor="#000" />
      </linearGradient>
      <mask id="noseMask">
        <path d="M1132 300H1400V770H1132Z" fill="url(#noseFade)" />
      </mask>
    </defs>

    <path d="M300 1345H2100" stroke="#17647a" strokeWidth="4" />
    <path d="M563 850L1693 1131L1685 1165L556 884Z" fill="#c9dcf6" />
    <path d="M873 260V1390Q873 1396 879 1396H1382Q1388 1396 1388 1390V260Z" fill="#b8ab9e" stroke="#cc8636" strokeWidth="2" />
    <path
      d="M1132 327C1094 358 1062 394 1031 431C1000 470 968 518 946 563C920 618 902 670 899 727V1345H1365V763C1364 714 1356 668 1346 634C1332 590 1310 546 1285 509C1262 470 1240 440 1217 413C1190 381 1162 352 1132 327Z"
      fill="url(#barrel)"
    />
    <path d="M1132 327C1094 358 1062 394 1031 431C1000 470 968 518 946 563C920 618 902 670 899 727H1132Z" fill="url(#noseLeft)" />
    <path
      d="M1132 327C1162 352 1190 381 1217 413C1240 440 1262 470 1285 509C1310 546 1332 590 1346 634C1356 668 1364 714 1365 763H1132Z"
      fill="url(#noseRight)"
      mask="url(#noseMask)"
    />
    <path d="M873 1345H899" stroke="#17647a" strokeWidth="4" />
    <path d="M899 1345H1365" stroke="#4e8d5e" strokeWidth="4" />
    <path d="M1366 1345H1864" stroke="#173c4c" strokeWidth="3" />

    <path d="M1132 260V1344" stroke="#dcd6f2" strokeWidth="4" />
    <path d="M1132 274V1344" stroke="#17087c" strokeWidth="4" strokeDasharray="34 10 10 10" strokeDashoffset="48" />
    <path d="M563 850L1693 1131L1685 1165L556 884ZM1133 992V1027" fill="none" stroke="#0b0b96" strokeWidth="4" />

    <g stroke="#1d2b38" strokeWidth="2" fill="none">
      <path d="M510 719L457 928M463 824L556 848M456 858L550 882" />
      <path d="M586 755L564 844M582 773L1497 1000M1540 1011L1711 1053M1717 1037L1694 1126" />
      <path d="M1690 1164H1865M1846 1165V1248M1846 1270V1343" />
      <path d="M1628 1153Q1616 1205 1609 1264M1606 1286L1605 1343" />
      <path d="M1684 1170V1455M1132 1345V1490M1133 1437H1378M1421 1437H1684" />
      <DimArrow x={483} y={828} angle={-76} />
      <DimArrow x={474} y={862} angle={104} />
      <DimArrow x={582} y={773} angle={14} />
      <DimArrow x={1711} y={1053} angle={194} />
      <DimArrow x={1846} y={1166} angle={90} />
      <DimArrow x={1846} y={1343} angle={-90} />
      <DimArrow x={1628} y={1153} angle={102} />
      <DimArrow x={1605} y={1343} angle={-89} />
      <DimArrow x={1133} y={1437} angle={0} />
      <DimArrow x={1684} y={1437} angle={180} />
    </g>

    <g fill="#3b4a5a" fontSize="24" textAnchor="middle">
      <text x="455" y="948">12</text>
      <text x="1519" y="1015">400</text>
      <text x="1607" y="1283">14.00</text>
      <text x="1846" y="1268">62</text>
      <text x="1400" y="1446">190</text>
    </g>

    <path d="M434 1376H463" stroke="#c01818" strokeWidth="2" />
    <path d="M462 1365L483 1376L462 1387Z" fill="#a80f12" />
    <path d="M423 1387V1417" stroke="#101088" strokeWidth="3" />
    <path d="M411 1416H435L423 1436Z" fill="#0808a4" />
    <circle cx="423" cy="1376" r="12" fill="#0aa41a" />
    <path d="M419 1371L423 1377L427 1371M423 1377V1382" stroke="#4fe05a" strokeWidth="2" fill="none" />
    <g fontSize="23" textAnchor="middle">
      <text x="496" y="1385" fill="#e5425c">X</text>
      <text x="423" y="1457" fill="#4548cc">Z</text>
    </g>
  </svg>
);

const NavBar = () => (
  <div className="absolute right-[3px] top-[255px] flex w-[70px] flex-col items-center rounded-xl border-[3px] border-[#8fa3b8] bg-[#d0e0ef] pb-2 pt-1 text-[#7b8794]">
    <button aria-label="Close navigation bar" className="mr-1.5 self-end">
      <Icon size={16}>
        <circle cx="8" cy="8" r="6" stroke="#8793a0" />
        <path d="M5 5L11 11M11 5L5 11" stroke="#8793a0" />
      </Icon>
    </button>
    <button aria-label="Full navigation wheel" className="mt-5">
      <Icon size={48}>
        <path d="M46 2V24A22 22 0 1 1 24 2Z" fill="#dfe9ef" stroke="#8793a0" strokeWidth={3} />
        <path d="M11 38A20 20 0 0 0 38 38L32 33H17Z" fill="#a9d9b6" stroke="none" />
        <circle cx="24" cy="24" r="12" fill="#e6eaf0" stroke="#a2a9b4" />
      </Icon>
    </button>
    <span className="mt-3">
      <Caret />
    </span>
    <span className="mb-3 mt-2 h-0.5 w-[50px] bg-[#a3b0bd]" />
    <button aria-label="Pan">
      <Icon size={36}>
        <path
          d="M2 18C6 16 10 20 12 22L8 9C8 6 12 6 13 9L15 15L15 5C16 2 19 2 20 5V14L23 5C24 2 28 3 27 6L26 15L30 8C32 6 34 8 33 11L30 24C28 31 25 34 19 34C12 34 8 26 2 18Z"
          fill="#e9eef3"
          stroke="#78838f"
        />
      </Icon>
    </button>
    <button aria-label="Zoom" className="mt-3">
      <Icon size={36}>
        <circle cx="13" cy="15" r="10" fill="#e0e6ef" stroke="#7b8794" />
        <path d="M20 22L28 31" stroke="#7b8794" strokeWidth={5} />
        <path d="M29 1V11M24 6H34M24 14H34" stroke="#6d7884" />
      </Icon>
    </button>
    <span className="mt-3">
      <Caret />
    </span>
    <button aria-label="Orbit" className="mt-3">
      <Icon size={36}>
        <path d="M12 9C15 -1 22 2 22 10M22 26C21 34 13 36 12 26V9" stroke="#7b8794" />
        <path d="M7 12C0 14 0 23 7 24M15 24H28C37 22 36 15 27 13L19 11" stroke="#7b8794" />
        <path d="M17 14V22M13 18H21M26 11V17" stroke="#c46a78" />
      </Icon>
    </button>
    <span className="mt-3">
      <Caret />
    </span>
    <button aria-label="Look at" className="mt-3">
      <Icon size={36}>
        <path d="M6 10L16 2V6H28V12" stroke="#7b8794" />
        <path d="M2 12H34V34H2Z" fill="#e6dd50" stroke="#78784e" />
        <path d="M9 19H27V27H9Z" fill="#c5c0ea" stroke="#6f6f8c" />
      </Icon>
    </button>
    <button aria-label="Zoom all" className="mt-3">
      <Icon size={36}>
        <circle cx="15" cy="15" r="12" fill="#e0e6ef" stroke="#7b8794" strokeWidth={3} />
        <path d="M23 24L32 33" stroke="#7b8794" strokeWidth={5} />
        <path d="M10 9H16L20 13V22H10Z" fill="#fff" stroke="#7b8794" />
      </Icon>
    </button>
    <button aria-label="Navigation bar options" className="mr-1.5 mt-5 self-end">
      <Icon size={16}>
        <circle cx="8" cy="8" r="6" stroke="#8793a0" />
        <path d="M4 8H12" stroke="#8793a0" />
      </Icon>
    </button>
  </div>
);

const Viewport = () => (
  <main className="relative min-w-0 flex-1 overflow-hidden bg-[#c2dcf7]">
    <div className="absolute inset-0">
      <SketchCanvas />
    </div>
    <div className="absolute right-1 top-3.5 flex items-center gap-4">
      <button aria-label="Minimize document">
        <svg width="25" height="24" viewBox="0 0 25 24" aria-hidden="true">
          <path d="M1 12H24V18H1Z" fill="#fff" stroke="#4a5663" strokeWidth="2" />
        </svg>
      </button>
      <button aria-label="Restore document">
        <svg width="24" height="24" viewBox="0 0 24 24" aria-hidden="true">
          <path d="M7 1H23V17H17V23H1V7H7Z" fill="#fff" stroke="#4a5663" strokeWidth="2" />
          <path d="M6 7H17V17M7 12H12V17H7Z" fill="none" stroke="#4a5663" strokeWidth="2" />
        </svg>
      </button>
      <button aria-label="Close document">
        <svg width="24" height="22" viewBox="0 0 24 22" fill="none" aria-hidden="true">
          <path d="M3 3L21 19M21 3L3 19" stroke="#4a5663" strokeWidth="8" />
          <path d="M4 4L20 18M20 4L4 18" stroke="#fff" strokeWidth="4" />
        </svg>
      </button>
    </div>
    <button className="absolute right-[61px] top-[110px] h-[92px] w-[92px] border-2 border-[#8496a6] bg-[#d3e2ef] p-4 shadow-[0_0_16px_rgba(120,140,180,0.35)]">
      <span className="flex h-full w-full items-center justify-center bg-[#c9d8e4] text-[21px] font-bold text-[#8d9aa6]">TOP</span>
    </button>
    <NavBar />
  </main>
);

const statusTools: IconName[] = ["gridSnap", "conSettings", "dimDisplay", "slice", "relax"];

const StatusBar = () => (
  <footer className="flex h-[50px] shrink-0 items-center bg-gradient-to-b from-white via-[#dedede] via-40% to-[#b4b4b4] pt-2 text-[#1d1d1d]">
    <span className="w-[899px]">Ready</span>
    <div className="flex flex-1 items-center gap-4 border-l border-[#cfcfcf] pl-3">
      {statusTools.map((name) => (
        <span key={name} className="flex items-center gap-2.5">
          <button aria-label={name}>
            <Icon>{icons[name]}</Icon>
          </button>
          {name === "dimDisplay" && <Caret />}
        </span>
      ))}
    </div>
    <span className="w-[237px] whitespace-nowrap border-l border-[#c4c4c4] pl-2">0.000 mm, 0.000 mm</span>
    <span className="w-60 whitespace-nowrap border-l border-[#c4c4c4] pl-2">1 dimensions needed</span>
    <span className="w-[76px] border-l border-[#c4c4c4] pl-3">1</span>
    <span className="w-[74px] border-l border-[#c4c4c4] pl-3">1</span>
  </footer>
);

export default function App() {
  return (
    <div className="flex h-screen flex-col overflow-hidden border-l-[3px] border-[#1d5fc4] bg-[#f0f0f0] font-['Noto_Sans','Open_Sans',sans-serif] text-[22px] leading-7">
      <header className="flex shrink-0 bg-[#3f3f3f]">
        <button className="flex h-[81px] w-[81px] shrink-0 items-center border-2 border-[#1c1c1c] bg-gradient-to-b from-[#b5b5b5] to-[#6f6f6f] pl-3">
          <span className="flex w-12 flex-col items-center">
            <svg width="36" height="54" viewBox="0 0 36 54" aria-hidden="true">
              <path d="M1 1H35V15H26V39H34V53H1V39H10V15H1Z" fill="#d9601c" />
              <path d="M10 6H26V48H10Z" fill="#8a3108" />
              <path d="M14 15H26V39H18Z" fill="#c9500f" />
            </svg>
            <span className="text-base font-bold leading-[18px] text-[#1c1c1c]">PRO</span>
          </span>
          <span className="text-[#333]">
            <Caret big />
          </span>
        </button>
        <div className="min-w-0 flex-1">
          <TitleBar />
          <TabBar />
        </div>
      </header>
      <Ribbon />
      <div className="flex min-h-0 flex-1">
        <ModelBrowser />
        <Viewport />
      </div>
      <StatusBar />
      <div className="h-[5px] shrink-0 border-t-2 border-[#1e2226] bg-[#77738a]" />
    </div>
  );
}
